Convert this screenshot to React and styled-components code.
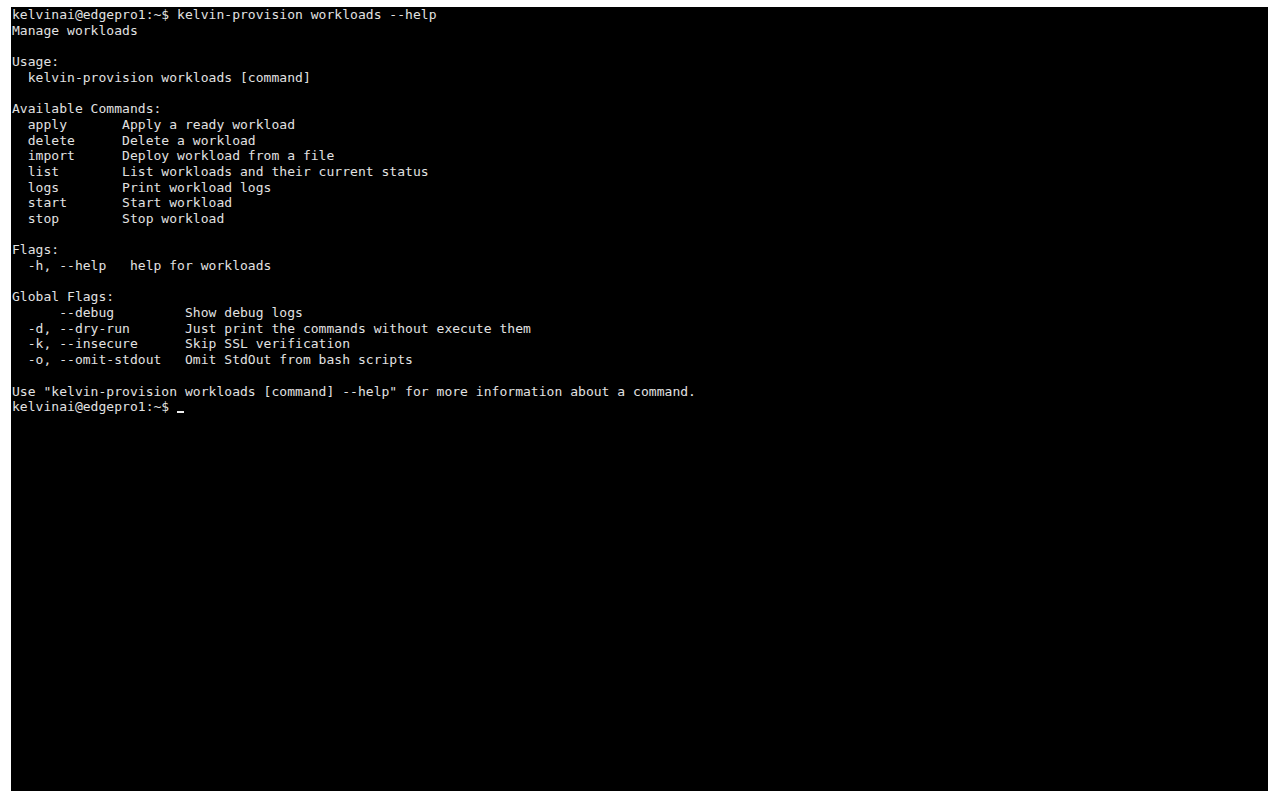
import React from 'react';
import styled, { createGlobalStyle } from 'styled-components';

const GlobalStyle = createGlobalStyle`
  html, body {
    margin: 0;
    padding: 0;
    background: #ffffff;
  }
`;

const Page = styled.div`
  width: 1283px;
  height: 800px;
  padding: 7px 15px 9px 11px;
  box-sizing: border-box;
  background: #ffffff;
`;

const Screen = styled.main`
  width: 1257px;
  height: 784px;
  background: #000000;
  padding: 0 0 0 1px;
  box-sizing: border-box;
  overflow: hidden;
`;

const Line = styled.div`
  font-family: "DejaVu Sans Mono", "Liberation Mono", monospace;
  font-size: 13px;
  letter-spacing: 0.035px;
  line-height: 15.7px;
  height: 15.7px;
  color: #e2e2e2;
  white-space: pre;
`;

const Cursor = styled.span`
  display: inline-block;
  width: 7px;
  height: 2px;
  background: #eeeeee;
  vertical-align: -2px;
`;

const output = [
  'kelvinai@edgepro1:~$ kelvin-provision workloads --help',
  'Manage workloads',
  '',
  'Usage:',
  '  kelvin-provision workloads [command]',
  '',
  'Available Commands:',
  '  apply       Apply a ready workload',
  '  delete      Delete a workload',
  '  import      Deploy workload from a file',
  '  list        List workloads and their current status',
  '  logs        Print workload logs',
  '  start       Start workload',
  '  stop        Stop workload',
  '',
  'Flags:',
  '  -h, --help   help for workloads',
  '',
  'Global Flags:',
  '      --debug         Show debug logs',
  '  -d, --dry-run       Just print the commands without execute them',
  '  -k, --insecure      Skip SSL verification',
  '  -o, --omit-stdout   Omit StdOut from bash scripts',
  '',
  'Use "kelvin-provision workloads [command] --help" for more information about a command.',
];

const App = () => (
  <>
    <GlobalStyle />
    <Page>
      <Screen>
        {output.map((text, i) => (
          <Line key={i}>{text}</Line>
        ))}
        <Line>
          {'kelvinai@edgepro1:~$ '}
          <Cursor />
        </Line>
      </Screen>
    </Page>
  </>
);

export default App;
